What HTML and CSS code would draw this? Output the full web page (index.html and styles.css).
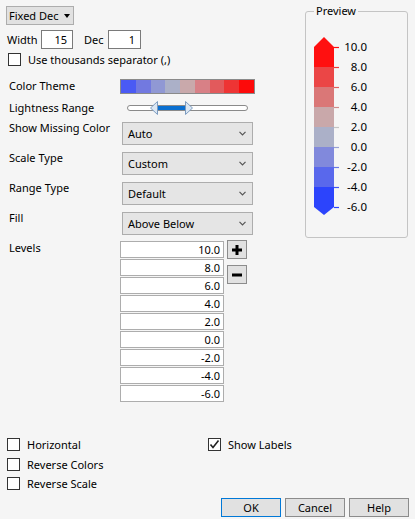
FILE: index.html
```html
<!DOCTYPE html>
<html>
<head>
<meta charset="utf-8">
<link rel="stylesheet" href="styles.css">
</head>
<body>
<div class="dialog">
  <div class="top">
    <div class="left">
      <div class="fmt"><span>Fixed Dec</span><span class="tri"></span></div>
      <div class="wdrow">
        <span class="wlab">Width</span>
        <div class="num w1">15</div>
        <span class="dlab">Dec</span>
        <div class="num w2">1</div>
      </div>
      <div class="chk sep"><span class="box"></span><span>Use thousands separator (,)</span></div>
      <div class="frow theme">
        <span class="flabel">Color Theme</span>
        <div class="ramp">
          <span style="background:#4a5af4"></span><span style="background:#7279e0"></span><span style="background:#9098d4"></span><span style="background:#abb0c8"></span><span style="background:#c9a9ab"></span><span style="background:#d88086"></span><span style="background:#e25a5c"></span><span style="background:#ee3434"></span><span style="background:#fd0a0a"></span>
        </div>
      </div>
      <div class="frow light">
        <span class="flabel">Lightness Range</span>
        <div class="slider">
          <div class="track"></div>
          <div class="fill"></div>
          <svg class="thumb t1" width="8" height="14" viewBox="0 0 8 14"><path d="M7.5 0.5 L7.5 13.5 L0.5 7 Z" fill="#dbe6f2" stroke="#7d9cc0"/></svg>
          <svg class="thumb t2" width="8" height="14" viewBox="0 0 8 14"><path d="M0.5 0.5 L0.5 13.5 L7.5 7 Z" fill="#dbe6f2" stroke="#7d9cc0"/></svg>
        </div>
      </div>
      <div class="frow dd first">
        <span class="flabel">Show Missing Color</span>
        <div class="select"><span>Auto</span><svg width="7" height="5" viewBox="0 0 7 5"><polyline points="0.5,0.8 3.5,3.8 6.5,0.8" fill="none" stroke="#555" stroke-width="1.2"/></svg></div>
      </div>
      <div class="frow dd">
        <span class="flabel">Scale Type</span>
        <div class="select"><span>Custom</span><svg width="7" height="5" viewBox="0 0 7 5"><polyline points="0.5,0.8 3.5,3.8 6.5,0.8" fill="none" stroke="#555" stroke-width="1.2"/></svg></div>
      </div>
      <div class="frow dd">
        <span class="flabel">Range Type</span>
        <div class="select"><span>Default</span><svg width="7" height="5" viewBox="0 0 7 5"><polyline points="0.5,0.8 3.5,3.8 6.5,0.8" fill="none" stroke="#555" stroke-width="1.2"/></svg></div>
      </div>
      <div class="frow dd">
        <span class="flabel">Fill</span>
        <div class="select"><span>Above Below</span><svg width="7" height="5" viewBox="0 0 7 5"><polyline points="0.5,0.8 3.5,3.8 6.5,0.8" fill="none" stroke="#555" stroke-width="1.2"/></svg></div>
      </div>
      <div class="frow levels">
        <span class="flabel">Levels</span>
        <div class="levwrap">
          <div class="levlist">
            <div class="lev">10.0</div>
            <div class="lev">8.0</div>
            <div class="lev">6.0</div>
            <div class="lev">4.0</div>
            <div class="lev">2.0</div>
            <div class="lev">0.0</div>
            <div class="lev">-2.0</div>
            <div class="lev">-4.0</div>
            <div class="lev">-6.0</div>
          </div>
          <div class="pm">
            <div class="pmbtn"><svg width="12" height="12" viewBox="0 0 12 12"><rect x="4.5" y="1" width="3" height="10" fill="#000"/><rect x="1" y="4.5" width="10" height="3" fill="#000"/></svg></div>
            <div class="pmbtn minus"><svg width="12" height="12" viewBox="0 0 12 12"><rect x="1" y="4.5" width="10" height="3" fill="#000"/></svg></div>
          </div>
        </div>
      </div>
    </div>
    <fieldset class="preview">
      <legend>Preview</legend>
      <div class="scale">
        <svg class="bar" width="26" height="180" viewBox="0 0 26 180">
          <path d="M0 10 L10 0 L20 10 L20 30 L0 30 Z" fill="#ff1010"/>
          <rect x="0" y="30" width="20" height="20" fill="#eb4646"/>
          <rect x="0" y="50" width="20" height="20" fill="#da7777"/>
          <rect x="0" y="70" width="20" height="20" fill="#c9a8aa"/>
          <rect x="0" y="90" width="20" height="20" fill="#abb0c8"/>
          <rect x="0" y="110" width="20" height="20" fill="#8189dc"/>
          <rect x="0" y="130" width="20" height="20" fill="#5968ec"/>
          <path d="M0 150 L20 150 L20 170 L10 178 L0 170 Z" fill="#2c44fc"/>
          <g stroke-width="1.2">
            <line x1="20" y1="10.5" x2="25" y2="10.5" stroke="#ff1010"/>
            <line x1="20" y1="30.5" x2="25" y2="30.5" stroke="#ee3a3a"/>
            <line x1="20" y1="50.5" x2="25" y2="50.5" stroke="#e06060"/>
            <line x1="20" y1="70.5" x2="25" y2="70.5" stroke="#d08c8c"/>
            <line x1="20" y1="90.5" x2="25" y2="90.5" stroke="#c4c4c4"/>
            <line x1="20" y1="110.5" x2="25" y2="110.5" stroke="#98a0d4"/>
            <line x1="20" y1="130.5" x2="25" y2="130.5" stroke="#6a78e4"/>
            <line x1="20" y1="150.5" x2="25" y2="150.5" stroke="#4455f2"/>
            <line x1="20" y1="170.5" x2="25" y2="170.5" stroke="#2c44fc"/>
          </g>
        </svg>
        <div class="ticks">
          <span>10.0</span><span>8.0</span><span>6.0</span><span>4.0</span><span>2.0</span><span>0.0</span><span>-2.0</span><span>-4.0</span><span>-6.0</span>
        </div>
      </div>
    </fieldset>
  </div>
  <div class="bottom">
    <div class="opts">
      <div class="optcol">
        <div class="chk"><span class="box"></span><span>Horizontal</span></div>
        <div class="chk r2"><span class="box"></span><span>Reverse Colors</span></div>
        <div class="chk r3"><span class="box"></span><span>Reverse Scale</span></div>
      </div>
      <div class="optcol2">
        <div class="chk"><span class="box"><svg width="11" height="11" viewBox="0 0 11 11"><polyline points="1.5,5.5 4,8.5 9.5,1.5" fill="none" stroke="#222" stroke-width="1.6"/></svg></span><span>Show Labels</span></div>
      </div>
    </div>
    <div class="buttons">
      <div class="btn default">OK</div>
      <div class="btn">Cancel</div>
      <div class="btn">Help</div>
    </div>
  </div>
</div>
</body>
</html>
```

FILE: styles.css
```css
* { box-sizing: border-box; }
html, body { margin: 0; padding: 0; }
body {
  background: #f5f5f5;
  font-family: "Noto Sans", "DejaVu Sans", sans-serif;
  font-size: 11px;
  line-height: 16px;
  color: #000;
  width: 415px;
  height: 519px;
  overflow: hidden;
  white-space: nowrap;
}
.top { display: flex; align-items: flex-start; }
.left { width: 305px; padding-top: 6px; }

.fmt {
  margin-left: 6px;
  width: 68px;
  height: 19px;
  background: #e1e1e1;
  border: 1px solid #adadad;
  display: flex;
  align-items: center;
  padding-left: 2px;
}
.fmt .tri {
  margin-left: auto;
  margin-right: 3px;
  width: 0; height: 0;
  border-left: 3.5px solid transparent;
  border-right: 3.5px solid transparent;
  border-top: 4px solid #000;
}

.wdrow { display: flex; align-items: center; height: 19px; margin-top: 5px; }
.wlab { width: 41px; padding-left: 7px; }
.dlab { width: 35px; padding-left: 11px; }
.num {
  height: 19px;
  border: 1px solid #7a7a7a;
  background: #fff;
  text-align: right;
  padding-right: 5px;
  line-height: 17px;
}
.w1 { width: 32px; }
.w2 { width: 33px; }

.chk { display: flex; align-items: center; height: 13px; line-height: 12px; }
.chk .box {
  width: 13px; height: 13px;
  border: 1px solid #333;
  background: #fff;
  margin-right: 7px;
  display: flex; align-items: center; justify-content: center;
  flex: none;
}
.sep { margin-top: 4px; padding-left: 8px; }

.frow { display: grid; grid-template-columns: 120px 1fr; }
.flabel { padding-left: 9px; white-space: nowrap; }
.theme { margin-top: 12px; align-items: center; }
.ramp {
  width: 135px; height: 15px;
  border: 1px solid #8a8a8a;
  display: flex;
}
.ramp span { flex: 1; }

.light { margin-top: 6px; height: 16px; align-items: center; }
.light .flabel { line-height: 14px; }
.slider { position: relative; margin-left: 7px; width: 121px; height: 16px; }
.track {
  position: absolute; left: 0; right: 0; top: 5px; height: 6px;
  border: 1px solid #8a8a8a; border-radius: 3px; background: #fff;
}
.fill { position: absolute; left: 30px; width: 30px; top: 6px; height: 4px; background: #0a6fd0; }
.thumb { position: absolute; top: 1px; }
.t1 { left: 23px; }
.t2 { left: 58px; }

.dd { margin-top: 7px; }
.dd.first { margin-top: 6px; }
.dd .flabel { line-height: 12px; }
.select {
  margin-left: 2px;
  width: 131px; height: 23px;
  background: #e5e5e5;
  border: 1px solid #adadad;
  display: flex; align-items: center; justify-content: space-between;
  padding: 0 6px 0 5px;
}

.levels { margin-top: 6px; }
.levels .flabel { line-height: 14px; }
.levwrap { display: flex; align-items: flex-start; }
.levlist { display: flex; flex-direction: column; gap: 1px; width: 104px; }
.lev {
  height: 17px;
  border: 1px solid #adadad;
  background: #fff;
  text-align: right;
  padding-right: 3px;
  line-height: 15px;
}
.pm { margin-left: 3px; margin-top: -1px; display: flex; flex-direction: column; gap: 6px; }
.pmbtn {
  width: 20px; height: 19px;
  background: #e1e1e1;
  border: 1px solid #8c8c8c;
  display: flex; align-items: center; justify-content: center;
}

.preview {
  margin: 3px 0 0 0;
  width: 103px;
  height: 235px;
  border: 1px solid #c4c4c4;
  border-radius: 3px;
  padding: 1px 0 0 8px;
  min-width: 0;
}
.preview legend { padding: 0 2px; line-height: 16px; }
.scale { display: flex; margin-top: 17px; }
.ticks { display: flex; flex-direction: column; width: 27px; text-align: right; font-size: 11.5px; }
.ticks span { height: 20px; line-height: 19px; }

.bottom { margin-top: 36px; }
.opts { display: flex; }
.optcol { width: 208px; padding-left: 7px; }
.r2 { margin-top: 7px; }
.r3 { margin-top: 6px; }
.buttons { display: flex; justify-content: flex-end; gap: 4px; padding-right: 6px; margin-top: 8px; }
.btn {
  width: 60px; height: 19px;
  background: #e1e1e1;
  border: 1px solid #8c8c8c;
  text-align: center;
  line-height: 17px;
}
.btn.default { border-color: #0078d7; }
```
